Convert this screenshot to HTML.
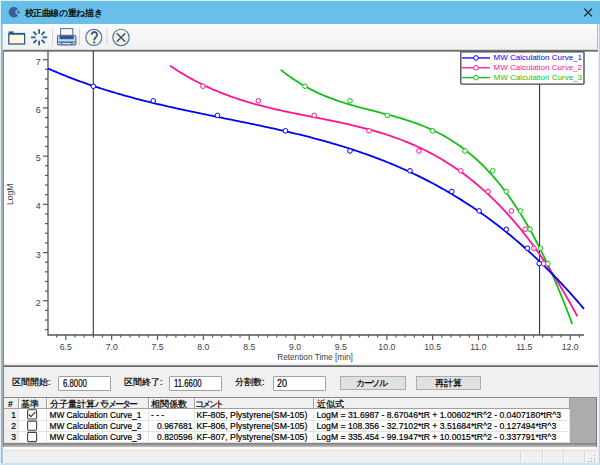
<!DOCTYPE html>
<html><head><meta charset="utf-8"><style>
*{box-sizing:border-box}
html,body{margin:0;padding:0;width:600px;height:465px;overflow:hidden;background:#dceef8;font-family:"Liberation Sans",sans-serif;}
.a{position:absolute}
.t{position:absolute;white-space:nowrap;line-height:1}
.s{-webkit-text-stroke:0.2px #000}
.in{-webkit-text-stroke:0.2px #000;position:absolute;background:#fff;border:1px solid #a2a2a2;border-radius:1px;font-size:10px;line-height:10px;padding-left:3.5px;color:#000}
.bt{-webkit-text-stroke:0.2px #000;position:absolute;background:#e1e1e1;border:1px solid #adadad;font-size:8.5px;line-height:12px;text-align:center;color:#000}
.g{position:absolute;background:#fff}
.sx{display:inline-block;transform:scaleX(0.78);transform-origin:0 0;margin-top:2.5px}
</style></head><body>
<div class="a" style="left:1px;top:1px;width:599px;height:464px;background:#68bfea"></div>
<div class="a" style="left:1px;top:24px;width:1px;height:441px;background:#7cc2ea"></div>
<div class="a" style="left:2px;top:24px;width:1px;height:441px;background:#b4ccdc"></div>
<div class="a" style="left:598px;top:24px;width:1px;height:441px;background:#f2eeee"></div>
<div class="a" style="left:599px;top:24px;width:1px;height:441px;background:#a8d6f2"></div>
<div class="a" style="left:1px;top:463px;width:599px;height:2px;background:#c6e4f6"></div>
<div class="t" style="left:24.5px;top:9px;font-size:9px;letter-spacing:-0.35px;color:#000;-webkit-text-stroke:0.25px #000">校正曲線の重ね描き</div>
<div class="a" style="left:3px;top:24px;width:595px;height:439px;background:#f0f0f0"></div>
<div class="a" style="left:3px;top:24px;width:594.5px;height:25px;background:linear-gradient(#fbfbfb,#f1f1f1);border-right:1px solid #b8b8b8"></div>
<div class="a" style="left:3px;top:49px;width:595px;height:1px;background:#d8d8d8"></div>
<div class="a" style="left:3px;top:50px;width:595px;height:1px;background:#6e6e6e"></div>
<div class="a" style="left:3px;top:51px;width:595px;height:1px;background:#9c9c9c"></div>
<div class="a" style="left:3px;top:52px;width:594.5px;height:311px;background:#fff"></div>
<div class="a" style="left:3px;top:363px;width:594.5px;height:2px;background:#f3f3f3"></div>
<div class="a" style="left:3px;top:365px;width:595px;height:1px;background:#8a8a8a"></div>
<div class="a" style="left:3px;top:366px;width:595px;height:1px;background:#6a6a6a"></div>
<div class="a" style="left:2px;top:50px;width:1px;height:396px;background:#a8a8a8"></div>
<div class="a" style="left:3px;top:50px;width:1px;height:396px;background:#8a8a8a"></div>
<!-- control panel -->
<div class="t s" style="left:12px;top:378px;font-size:9px;color:#000;">区間開始:</div>
<div class="in" style="left:58px;top:375.5px;width:52.5px;height:15.5px"><span class="sx">6.8000</span></div>
<div class="t s" style="left:124px;top:378px;font-size:9px;color:#000;">区間終了:</div>
<div class="in" style="left:169.3px;top:375.5px;width:52.5px;height:15.5px"><span class="sx">11.6600</span></div>
<div class="t s" style="left:235px;top:378px;font-size:9px;color:#000;">分割数:</div>
<div class="in" style="left:272.5px;top:375.5px;width:53.3px;height:15.5px"><span class="sx" style="transform:scaleX(0.9)">20</span></div>
<div class="bt" style="left:340px;top:376.4px;width:65.5px;height:14px"><span style="letter-spacing:-1.5px;margin-left:-3px">カーソル</span></div>
<div class="bt" style="left:416px;top:376.4px;width:65px;height:14px">再計算</div>
<!-- table -->
<div class="a" style="left:3px;top:397px;width:594px;height:50px;background:#acacac;border-top:1px solid #8a8a8a;border-left:1px solid #8a8a8a;border-right:1px solid #7a7a7a"></div>
<div class="a" style="left:4px;top:443px;width:592px;height:4px;background:linear-gradient(#7e7e7e,#9a9a9a 50%,#c4c4c4)"></div>
<div class="a" style="left:4px;top:398px;width:565px;height:45px;background:#fff"></div>
<div class="a" style="left:4px;top:398px;width:565px;height:11px;background:#f0f0f0;border-bottom:1px solid #a0a0a0"></div>
<div class="a" style="left:4px;top:409px;width:14px;height:34px;background:#f0f0f0"></div>
<div class="a" style="left:18px;top:398px;width:1px;height:11px;background:#a0a0a0"></div>
<div class="a" style="left:19px;top:398px;width:1px;height:10px;background:#fff"></div>
<div class="a" style="left:18px;top:409px;width:1px;height:34px;background:#e3e3e3"></div>
<div class="a" style="left:46px;top:398px;width:1px;height:11px;background:#a0a0a0"></div>
<div class="a" style="left:47px;top:398px;width:1px;height:10px;background:#fff"></div>
<div class="a" style="left:46px;top:409px;width:1px;height:34px;background:#e3e3e3"></div>
<div class="a" style="left:148px;top:398px;width:1px;height:11px;background:#a0a0a0"></div>
<div class="a" style="left:149px;top:398px;width:1px;height:10px;background:#fff"></div>
<div class="a" style="left:148px;top:409px;width:1px;height:34px;background:#e3e3e3"></div>
<div class="a" style="left:194px;top:398px;width:1px;height:11px;background:#a0a0a0"></div>
<div class="a" style="left:195px;top:398px;width:1px;height:10px;background:#fff"></div>
<div class="a" style="left:194px;top:409px;width:1px;height:34px;background:#e3e3e3"></div>
<div class="a" style="left:313px;top:398px;width:1px;height:11px;background:#a0a0a0"></div>
<div class="a" style="left:314px;top:398px;width:1px;height:10px;background:#fff"></div>
<div class="a" style="left:313px;top:409px;width:1px;height:34px;background:#e3e3e3"></div>
<div class="a" style="left:569px;top:398px;width:1px;height:11px;background:#a0a0a0"></div>
<div class="a" style="left:569px;top:409px;width:1px;height:34px;background:#e3e3e3"></div>
<div class="a" style="left:4px;top:420px;width:565px;height:1px;background:#e3e3e3"></div>
<div class="a" style="left:4px;top:431px;width:565px;height:1px;background:#e3e3e3"></div>
<div class="a" style="left:4px;top:442px;width:565px;height:1px;background:#e3e3e3"></div>
<div class="t s" style="left:8px;top:399.5px;font-size:8.5px;color:#000;">#</div>
<div class="t s" style="left:20.5px;top:399.5px;font-size:9px;color:#000;">基準</div>
<div class="t s" style="left:49.5px;top:399.5px;font-size:9px;color:#000;">分子量計算<span style="letter-spacing:-2.2px">パラメーター</span></div>
<div class="t s" style="left:151px;top:399.5px;font-size:9px;color:#000;">相関係数</div>
<div class="t s" style="left:195px;top:399.5px;font-size:9px;color:#000;"><span style="letter-spacing:-2.2px">コメント</span></div>
<div class="t s" style="left:317px;top:399.5px;font-size:9px;color:#000;">近似式</div>
<div class="t s" style="left:-84px;width:100px;text-align:right;top:410.5px;font-size:8.5px;color:#000;">1</div>
<div class="t s" style="left:49.5px;top:410.5px;font-size:8.3px;color:#000;">MW Calculation Curve_1</div>
<div class="t s" style="left:151px;top:410.5px;font-size:8.5px;color:#000;letter-spacing:2.3px">---</div>
<div class="t s" style="left:196.5px;top:410.5px;font-size:8.75px;color:#000;">KF-805, Plystyrene(SM-105)</div>
<div class="t s" style="left:316.5px;top:410.5px;font-size:8.65px;color:#000;">LogM = 31.6987 - 8.67046*tR + 1.00602*tR^2 - 0.0407180*tR^3</div>
<div class="t s" style="left:-84px;width:100px;text-align:right;top:421.8px;font-size:8.5px;color:#000;">2</div>
<div class="t s" style="left:49.5px;top:421.8px;font-size:8.3px;color:#000;">MW Calculation Curve_2</div>
<div class="t s" style="left:92.5px;width:100px;text-align:right;top:421.8px;font-size:8.5px;color:#000;">0.967681</div>
<div class="t s" style="left:196.5px;top:421.8px;font-size:8.75px;color:#000;">KF-806, Plystyrene(SM-105)</div>
<div class="t s" style="left:316.5px;top:421.8px;font-size:8.65px;color:#000;">LogM = 108.356 - 32.7102*tR + 3.51684*tR^2 - 0.127494*tR^3</div>
<div class="t s" style="left:-84px;width:100px;text-align:right;top:433.1px;font-size:8.5px;color:#000;">3</div>
<div class="t s" style="left:49.5px;top:433.1px;font-size:8.3px;color:#000;">MW Calculation Curve_3</div>
<div class="t s" style="left:92.5px;width:100px;text-align:right;top:433.1px;font-size:8.5px;color:#000;">0.820596</div>
<div class="t s" style="left:196.5px;top:433.1px;font-size:8.75px;color:#000;">KF-807, Plystyrene(SM-105)</div>
<div class="t s" style="left:316.5px;top:433.1px;font-size:8.65px;color:#000;">LogM = 335.454 - 99.1947*tR + 10.0015*tR^2 - 0.337791*tR^3</div>
<div class="a" style="left:3px;top:447px;width:594px;height:3px;background:#f8f8f8"></div>
<div class="a" style="left:3px;top:450px;width:594px;height:1px;background:#e0e0e0"></div>
<div class="a" style="left:520px;top:451px;width:1px;height:11px;background:#d6d6d6"></div>
<div class="a" style="left:521px;top:451px;width:1px;height:11px;background:#fafafa"></div>
<div class="a" style="left:542px;top:451px;width:1px;height:11px;background:#d6d6d6"></div>
<div class="a" style="left:543px;top:451px;width:1px;height:11px;background:#fafafa"></div>
<div class="a" style="left:563px;top:451px;width:1px;height:11px;background:#d6d6d6"></div>
<div class="a" style="left:564px;top:451px;width:1px;height:11px;background:#fafafa"></div>
<div class="a" style="left:584px;top:451px;width:1px;height:11px;background:#d6d6d6"></div>
<div class="a" style="left:585px;top:451px;width:1px;height:11px;background:#fafafa"></div>
<div class="a" style="left:594px;top:455px;width:1px;height:1px;background:#a8a8a8"></div>
<div class="a" style="left:591px;top:458px;width:1px;height:1px;background:#a8a8a8"></div>
<div class="a" style="left:594px;top:458px;width:1px;height:1px;background:#a8a8a8"></div>
<div class="a" style="left:588px;top:461px;width:1px;height:1px;background:#a8a8a8"></div>
<div class="a" style="left:591px;top:461px;width:1px;height:1px;background:#a8a8a8"></div>
<div class="a" style="left:594px;top:461px;width:1px;height:1px;background:#a8a8a8"></div>
<svg width="600" height="465" style="position:absolute;left:0;top:0">
<path d="M14.8,12.3 L17.90,9.10 A5.2,5.2 0 1 0 17.90,15.50 Z" fill="#3a6096"/>
<circle cx="18.4" cy="12.3" r="1.3" fill="#3a6096"/>
<path d="M584.3,8.6 L592,16.3 M592,8.6 L584.3,16.3" stroke="#111" stroke-width="1.05"/>
<path d="M8.8,32.2 H13.6" stroke="#2f5a90" stroke-width="1.6"/>
<rect x="8.8" y="33.6" width="15.8" height="10.4" fill="#fdf8dc" stroke="#2f5a90" stroke-width="1.3"/>
<path d="M8.8,33.8 H24.6" stroke="#2f5a90" stroke-width="1.8"/>
<line x1="42.60" y1="37.35" x2="47.10" y2="37.35" stroke="#2f5a90" stroke-width="1.8"/>
<line x1="41.57" y1="39.82" x2="44.76" y2="43.01" stroke="#2f5a90" stroke-width="1.8"/>
<line x1="39.10" y1="40.85" x2="39.10" y2="45.35" stroke="#2f5a90" stroke-width="1.8"/>
<line x1="36.63" y1="39.82" x2="33.44" y2="43.01" stroke="#2f5a90" stroke-width="1.8"/>
<line x1="35.60" y1="37.35" x2="31.10" y2="37.35" stroke="#2f5a90" stroke-width="1.8"/>
<line x1="36.63" y1="34.88" x2="33.44" y2="31.69" stroke="#2f5a90" stroke-width="1.8"/>
<line x1="39.10" y1="33.85" x2="39.10" y2="29.35" stroke="#2f5a90" stroke-width="1.8"/>
<line x1="41.57" y1="34.88" x2="44.76" y2="31.69" stroke="#2f5a90" stroke-width="1.8"/>
<line x1="52.5" y1="29.3" x2="52.5" y2="45.2" stroke="#d2d2d2" stroke-width="1"/>
<line x1="79.5" y1="29.3" x2="79.5" y2="45.2" stroke="#d2d2d2" stroke-width="1"/>
<line x1="107" y1="29.3" x2="107" y2="45.2" stroke="#d2d2d2" stroke-width="1"/>
<rect x="60.6" y="28.6" width="12.2" height="7" fill="#fbf6dc" stroke="#4a6fa5" stroke-width="1"/>
<rect x="57.5" y="35.3" width="18.4" height="9.7" rx="2" fill="#c9d8ea" stroke="#4169a2" stroke-width="1.1"/>
<rect x="59.6" y="35.8" width="14.2" height="3.4" fill="#2d5893"/>
<rect x="58.2" y="41.4" width="17" height="1.2" fill="#4a72aa"/>
<rect x="60.8" y="42.2" width="11.8" height="2.6" fill="#3d66a0"/>
<rect x="62.2" y="43" width="9" height="1.2" fill="#ebe6d8"/>
<circle cx="93.8" cy="37.45" r="8" fill="#f8f5dc" stroke="#4d72aa" stroke-width="1.2"/>
<path d="M91.6,34.8 A2.75,2.75 0 1 1 96.2,36.8 C95,37.8 94.3,38.3 94.3,40.2" fill="none" stroke="#2c5590" stroke-width="1.8"/>
<circle cx="94.3" cy="42.4" r="1.1" fill="#2c5590"/>
<circle cx="121" cy="37.45" r="8.2" fill="#f8f5dc" stroke="#4d72aa" stroke-width="1.2"/>
<path d="M116.8,33.2 L125.2,41.7 M125.2,33.2 L116.8,41.7" stroke="#2c5590" stroke-width="1.5"/>
<line x1="93.3" y1="51" x2="93.3" y2="335" stroke="#222" stroke-width="1"/>
<line x1="539.6" y1="51" x2="539.6" y2="335" stroke="#222" stroke-width="1"/>
<path d="M48,51 V335 H584" fill="none" stroke="#555" stroke-width="1.3"/>
<line x1="43" y1="59.70" x2="48" y2="59.70" stroke="#555" stroke-width="1.2"/>
<line x1="45" y1="69.34" x2="48" y2="69.34" stroke="#555" stroke-width="1.2"/>
<line x1="45" y1="78.98" x2="48" y2="78.98" stroke="#555" stroke-width="1.2"/>
<line x1="45" y1="88.63" x2="48" y2="88.63" stroke="#555" stroke-width="1.2"/>
<line x1="45" y1="98.27" x2="48" y2="98.27" stroke="#555" stroke-width="1.2"/>
<line x1="43" y1="107.91" x2="48" y2="107.91" stroke="#555" stroke-width="1.2"/>
<line x1="45" y1="117.55" x2="48" y2="117.55" stroke="#555" stroke-width="1.2"/>
<line x1="45" y1="127.19" x2="48" y2="127.19" stroke="#555" stroke-width="1.2"/>
<line x1="45" y1="136.84" x2="48" y2="136.84" stroke="#555" stroke-width="1.2"/>
<line x1="45" y1="146.48" x2="48" y2="146.48" stroke="#555" stroke-width="1.2"/>
<line x1="43" y1="156.12" x2="48" y2="156.12" stroke="#555" stroke-width="1.2"/>
<line x1="45" y1="165.76" x2="48" y2="165.76" stroke="#555" stroke-width="1.2"/>
<line x1="45" y1="175.40" x2="48" y2="175.40" stroke="#555" stroke-width="1.2"/>
<line x1="45" y1="185.05" x2="48" y2="185.05" stroke="#555" stroke-width="1.2"/>
<line x1="45" y1="194.69" x2="48" y2="194.69" stroke="#555" stroke-width="1.2"/>
<line x1="43" y1="204.33" x2="48" y2="204.33" stroke="#555" stroke-width="1.2"/>
<line x1="45" y1="213.97" x2="48" y2="213.97" stroke="#555" stroke-width="1.2"/>
<line x1="45" y1="223.61" x2="48" y2="223.61" stroke="#555" stroke-width="1.2"/>
<line x1="45" y1="233.26" x2="48" y2="233.26" stroke="#555" stroke-width="1.2"/>
<line x1="45" y1="242.90" x2="48" y2="242.90" stroke="#555" stroke-width="1.2"/>
<line x1="43" y1="252.54" x2="48" y2="252.54" stroke="#555" stroke-width="1.2"/>
<line x1="45" y1="262.18" x2="48" y2="262.18" stroke="#555" stroke-width="1.2"/>
<line x1="45" y1="271.82" x2="48" y2="271.82" stroke="#555" stroke-width="1.2"/>
<line x1="45" y1="281.47" x2="48" y2="281.47" stroke="#555" stroke-width="1.2"/>
<line x1="45" y1="291.11" x2="48" y2="291.11" stroke="#555" stroke-width="1.2"/>
<line x1="43" y1="300.75" x2="48" y2="300.75" stroke="#555" stroke-width="1.2"/>
<line x1="45" y1="310.39" x2="48" y2="310.39" stroke="#555" stroke-width="1.2"/>
<line x1="45" y1="320.03" x2="48" y2="320.03" stroke="#555" stroke-width="1.2"/>
<line x1="45" y1="329.68" x2="48" y2="329.68" stroke="#555" stroke-width="1.2"/>
<line x1="56.63" y1="335" x2="56.63" y2="337.5" stroke="#555" stroke-width="1.2"/>
<line x1="65.80" y1="335" x2="65.80" y2="340" stroke="#555" stroke-width="1.2"/>
<line x1="74.97" y1="335" x2="74.97" y2="337.5" stroke="#555" stroke-width="1.2"/>
<line x1="84.14" y1="335" x2="84.14" y2="337.5" stroke="#555" stroke-width="1.2"/>
<line x1="93.31" y1="335" x2="93.31" y2="337.5" stroke="#555" stroke-width="1.2"/>
<line x1="102.48" y1="335" x2="102.48" y2="337.5" stroke="#555" stroke-width="1.2"/>
<line x1="111.66" y1="335" x2="111.66" y2="340" stroke="#555" stroke-width="1.2"/>
<line x1="120.83" y1="335" x2="120.83" y2="337.5" stroke="#555" stroke-width="1.2"/>
<line x1="130.00" y1="335" x2="130.00" y2="337.5" stroke="#555" stroke-width="1.2"/>
<line x1="139.17" y1="335" x2="139.17" y2="337.5" stroke="#555" stroke-width="1.2"/>
<line x1="148.34" y1="335" x2="148.34" y2="337.5" stroke="#555" stroke-width="1.2"/>
<line x1="157.51" y1="335" x2="157.51" y2="340" stroke="#555" stroke-width="1.2"/>
<line x1="166.68" y1="335" x2="166.68" y2="337.5" stroke="#555" stroke-width="1.2"/>
<line x1="175.85" y1="335" x2="175.85" y2="337.5" stroke="#555" stroke-width="1.2"/>
<line x1="185.02" y1="335" x2="185.02" y2="337.5" stroke="#555" stroke-width="1.2"/>
<line x1="194.19" y1="335" x2="194.19" y2="337.5" stroke="#555" stroke-width="1.2"/>
<line x1="203.37" y1="335" x2="203.37" y2="340" stroke="#555" stroke-width="1.2"/>
<line x1="212.54" y1="335" x2="212.54" y2="337.5" stroke="#555" stroke-width="1.2"/>
<line x1="221.71" y1="335" x2="221.71" y2="337.5" stroke="#555" stroke-width="1.2"/>
<line x1="230.88" y1="335" x2="230.88" y2="337.5" stroke="#555" stroke-width="1.2"/>
<line x1="240.05" y1="335" x2="240.05" y2="337.5" stroke="#555" stroke-width="1.2"/>
<line x1="249.22" y1="335" x2="249.22" y2="340" stroke="#555" stroke-width="1.2"/>
<line x1="258.39" y1="335" x2="258.39" y2="337.5" stroke="#555" stroke-width="1.2"/>
<line x1="267.56" y1="335" x2="267.56" y2="337.5" stroke="#555" stroke-width="1.2"/>
<line x1="276.73" y1="335" x2="276.73" y2="337.5" stroke="#555" stroke-width="1.2"/>
<line x1="285.90" y1="335" x2="285.90" y2="337.5" stroke="#555" stroke-width="1.2"/>
<line x1="295.07" y1="335" x2="295.07" y2="340" stroke="#555" stroke-width="1.2"/>
<line x1="304.25" y1="335" x2="304.25" y2="337.5" stroke="#555" stroke-width="1.2"/>
<line x1="313.42" y1="335" x2="313.42" y2="337.5" stroke="#555" stroke-width="1.2"/>
<line x1="322.59" y1="335" x2="322.59" y2="337.5" stroke="#555" stroke-width="1.2"/>
<line x1="331.76" y1="335" x2="331.76" y2="337.5" stroke="#555" stroke-width="1.2"/>
<line x1="340.93" y1="335" x2="340.93" y2="340" stroke="#555" stroke-width="1.2"/>
<line x1="350.10" y1="335" x2="350.10" y2="337.5" stroke="#555" stroke-width="1.2"/>
<line x1="359.27" y1="335" x2="359.27" y2="337.5" stroke="#555" stroke-width="1.2"/>
<line x1="368.44" y1="335" x2="368.44" y2="337.5" stroke="#555" stroke-width="1.2"/>
<line x1="377.61" y1="335" x2="377.61" y2="337.5" stroke="#555" stroke-width="1.2"/>
<line x1="386.78" y1="335" x2="386.78" y2="340" stroke="#555" stroke-width="1.2"/>
<line x1="395.96" y1="335" x2="395.96" y2="337.5" stroke="#555" stroke-width="1.2"/>
<line x1="405.13" y1="335" x2="405.13" y2="337.5" stroke="#555" stroke-width="1.2"/>
<line x1="414.30" y1="335" x2="414.30" y2="337.5" stroke="#555" stroke-width="1.2"/>
<line x1="423.47" y1="335" x2="423.47" y2="337.5" stroke="#555" stroke-width="1.2"/>
<line x1="432.64" y1="335" x2="432.64" y2="340" stroke="#555" stroke-width="1.2"/>
<line x1="441.81" y1="335" x2="441.81" y2="337.5" stroke="#555" stroke-width="1.2"/>
<line x1="450.98" y1="335" x2="450.98" y2="337.5" stroke="#555" stroke-width="1.2"/>
<line x1="460.15" y1="335" x2="460.15" y2="337.5" stroke="#555" stroke-width="1.2"/>
<line x1="469.32" y1="335" x2="469.32" y2="337.5" stroke="#555" stroke-width="1.2"/>
<line x1="478.50" y1="335" x2="478.50" y2="340" stroke="#555" stroke-width="1.2"/>
<line x1="487.67" y1="335" x2="487.67" y2="337.5" stroke="#555" stroke-width="1.2"/>
<line x1="496.84" y1="335" x2="496.84" y2="337.5" stroke="#555" stroke-width="1.2"/>
<line x1="506.01" y1="335" x2="506.01" y2="337.5" stroke="#555" stroke-width="1.2"/>
<line x1="515.18" y1="335" x2="515.18" y2="337.5" stroke="#555" stroke-width="1.2"/>
<line x1="524.35" y1="335" x2="524.35" y2="340" stroke="#555" stroke-width="1.2"/>
<line x1="533.52" y1="335" x2="533.52" y2="337.5" stroke="#555" stroke-width="1.2"/>
<line x1="542.69" y1="335" x2="542.69" y2="337.5" stroke="#555" stroke-width="1.2"/>
<line x1="551.86" y1="335" x2="551.86" y2="337.5" stroke="#555" stroke-width="1.2"/>
<line x1="561.03" y1="335" x2="561.03" y2="337.5" stroke="#555" stroke-width="1.2"/>
<line x1="570.20" y1="335" x2="570.20" y2="340" stroke="#555" stroke-width="1.2"/>
<line x1="579.38" y1="335" x2="579.38" y2="337.5" stroke="#555" stroke-width="1.2"/>
<polyline points="280.75,69.74 282.75,71.34 284.74,72.90 286.74,74.41 288.73,75.88 290.73,77.31 292.73,78.69 294.72,80.03 296.72,81.33 298.72,82.59 300.71,83.81 302.71,84.99 304.70,86.14 306.70,87.25 308.70,88.33 310.69,89.38 312.69,90.39 314.69,91.37 316.68,92.32 318.68,93.24 320.67,94.14 322.67,95.00 324.67,95.84 326.66,96.66 328.66,97.45 330.66,98.21 332.65,98.96 334.65,99.68 336.64,100.38 338.64,101.07 340.64,101.73 342.63,102.38 344.63,103.01 346.63,103.63 348.62,104.23 350.62,104.82 352.61,105.40 354.61,105.96 356.61,106.52 358.60,107.06 360.60,107.60 362.60,108.13 364.59,108.66 366.59,109.18 368.58,109.69 370.58,110.20 372.58,110.71 374.57,111.22 376.57,111.73 378.57,112.24 380.56,112.75 382.56,113.27 384.55,113.78 386.55,114.31 388.55,114.84 390.54,115.37 392.54,115.92 394.54,116.47 396.53,117.03 398.53,117.61 400.52,118.19 402.52,118.79 404.52,119.41 406.51,120.03 408.51,120.68 410.51,121.34 412.50,122.02 414.50,122.71 416.49,123.43 418.49,124.17 420.49,124.93 422.48,125.72 424.48,126.52 426.48,127.36 428.47,128.22 430.47,129.10 432.46,130.02 434.46,130.96 436.46,131.94 438.45,132.94 440.45,133.98 442.44,135.05 444.44,136.15 446.44,137.29 448.43,138.47 450.43,139.68 452.43,140.93 454.42,142.22 456.42,143.55 458.41,144.92 460.41,146.33 462.41,147.79 464.40,149.29 466.40,150.84 468.40,152.43 470.39,154.07 472.39,155.76 474.38,157.49 476.38,159.28 478.38,161.12 480.37,163.01 482.37,164.96 484.37,166.95 486.36,169.01 488.36,171.12 490.35,173.29 492.35,175.51 494.35,177.80 496.34,180.14 498.34,182.55 500.34,185.02 502.33,187.55 504.33,190.15 506.32,192.81 508.32,195.54 510.32,198.33 512.31,201.20 514.31,204.13 516.31,207.14 518.30,210.21 520.30,213.36 522.29,216.58 524.29,219.88 526.29,223.25 528.28,226.70 530.28,230.22 532.28,233.83 534.27,237.51 536.27,241.27 538.26,245.12 540.26,249.05 542.26,253.06 544.25,257.15 546.25,261.33 548.25,265.60 550.24,269.96 552.24,274.40 554.23,278.94 556.23,283.56 558.23,288.27 560.22,293.08 562.22,297.98 564.22,302.98 566.21,308.07 568.21,313.26 570.20,318.55 572.20,323.93" fill="none" stroke="#14c014" stroke-width="1.8" stroke-linejoin="round"/>
<polyline points="170.00,65.66 172.00,67.01 173.99,68.34 175.99,69.64 177.99,70.91 179.99,72.16 181.98,73.39 183.98,74.59 185.98,75.76 187.97,76.91 189.97,78.03 191.97,79.14 193.96,80.22 195.96,81.27 197.96,82.31 199.96,83.32 201.95,84.31 203.95,85.28 205.95,86.23 207.94,87.16 209.94,88.07 211.94,88.96 213.94,89.83 215.93,90.68 217.93,91.51 219.93,92.32 221.92,93.12 223.92,93.90 225.92,94.66 227.91,95.41 229.91,96.14 231.91,96.85 233.91,97.55 235.90,98.23 237.90,98.90 239.90,99.55 241.89,100.19 243.89,100.82 245.89,101.43 247.89,102.03 249.88,102.62 251.88,103.20 253.88,103.76 255.87,104.31 257.87,104.86 259.87,105.39 261.86,105.91 263.86,106.42 265.86,106.92 267.86,107.42 269.85,107.90 271.85,108.38 273.85,108.85 275.84,109.31 277.84,109.76 279.84,110.21 281.84,110.65 283.83,111.09 285.83,111.52 287.83,111.94 289.82,112.36 291.82,112.78 293.82,113.19 295.81,113.60 297.81,114.00 299.81,114.41 301.81,114.81 303.80,115.20 305.80,115.60 307.80,115.99 309.79,116.38 311.79,116.78 313.79,117.17 315.79,117.56 317.78,117.95 319.78,118.35 321.78,118.74 323.77,119.14 325.77,119.54 327.77,119.94 329.76,120.35 331.76,120.75 333.76,121.16 335.76,121.58 337.75,122.00 339.75,122.42 341.75,122.85 343.74,123.29 345.74,123.73 347.74,124.17 349.74,124.63 351.73,125.09 353.73,125.55 355.73,126.03 357.72,126.51 359.72,127.01 361.72,127.51 363.71,128.02 365.71,128.54 367.71,129.07 369.71,129.61 371.70,130.16 373.70,130.72 375.70,131.30 377.69,131.88 379.69,132.48 381.69,133.09 383.69,133.72 385.68,134.36 387.68,135.01 389.68,135.67 391.67,136.36 393.67,137.05 395.67,137.76 397.66,138.49 399.66,139.23 401.66,139.99 403.66,140.77 405.65,141.56 407.65,142.37 409.65,143.20 411.64,144.05 413.64,144.92 415.64,145.80 417.64,146.71 419.63,147.64 421.63,148.58 423.63,149.55 425.62,150.54 427.62,151.54 429.62,152.58 431.61,153.63 433.61,154.71 435.61,155.80 437.61,156.93 439.60,158.07 441.60,159.24 443.60,160.44 445.59,161.66 447.59,162.90 449.59,164.17 451.59,165.47 453.58,166.79 455.58,168.14 457.58,169.52 459.57,170.93 461.57,172.36 463.57,173.82 465.56,175.31 467.56,176.83 469.56,178.38 471.56,179.95 473.55,181.56 475.55,183.20 477.55,184.87 479.54,186.57 481.54,188.31 483.54,190.07 485.54,191.87 487.53,193.70 489.53,195.57 491.53,197.46 493.52,199.40 495.52,201.36 497.52,203.36 499.51,205.40 501.51,207.47 503.51,209.58 505.51,211.72 507.50,213.90 509.50,216.12 511.50,218.38 513.49,220.67 515.49,223.00 517.49,225.37 519.49,227.78 521.48,230.23 523.48,232.72 525.48,235.25 527.47,237.82 529.47,240.43 531.47,243.08 533.46,245.77 535.46,248.51 537.46,251.28 539.46,254.10 541.45,256.97 543.45,259.88 545.45,262.83 547.44,265.82 549.44,268.86 551.44,271.95 553.44,275.08 555.43,278.25 557.43,281.48 559.43,284.75 561.42,288.06 563.42,291.43 565.42,294.84 567.41,298.30 569.41,301.81 571.41,305.36 573.41,308.97 575.40,312.62 577.40,316.33" fill="none" stroke="#ff1493" stroke-width="1.8" stroke-linejoin="round"/>
<polyline points="48.00,68.51 49.99,69.38 51.99,70.24 53.98,71.10 55.97,71.94 57.96,72.77 59.96,73.60 61.95,74.41 63.94,75.21 65.93,76.01 67.93,76.79 69.92,77.56 71.91,78.33 73.90,79.08 75.90,79.83 77.89,80.57 79.88,81.29 81.87,82.01 83.87,82.72 85.86,83.43 87.85,84.12 89.84,84.81 91.84,85.48 93.83,86.15 95.82,86.81 97.81,87.47 99.81,88.11 101.80,88.75 103.79,89.38 105.78,90.00 107.78,90.62 109.77,91.23 111.76,91.83 113.75,92.43 115.75,93.01 117.74,93.60 119.73,94.17 121.72,94.74 123.72,95.30 125.71,95.86 127.70,96.41 129.70,96.95 131.69,97.49 133.68,98.03 135.67,98.55 137.67,99.08 139.66,99.59 141.65,100.10 143.64,100.61 145.64,101.11 147.63,101.61 149.62,102.10 151.61,102.59 153.61,103.07 155.60,103.55 157.59,104.03 159.58,104.50 161.58,104.96 163.57,105.43 165.56,105.88 167.55,106.34 169.55,106.79 171.54,107.24 173.53,107.69 175.52,108.13 177.52,108.57 179.51,109.00 181.50,109.44 183.49,109.87 185.49,110.30 187.48,110.72 189.47,111.15 191.46,111.57 193.46,111.99 195.45,112.41 197.44,112.82 199.43,113.24 201.43,113.65 203.42,114.06 205.41,114.47 207.41,114.88 209.40,115.29 211.39,115.69 213.38,116.10 215.38,116.50 217.37,116.91 219.36,117.31 221.35,117.72 223.35,118.12 225.34,118.52 227.33,118.93 229.32,119.33 231.32,119.73 233.31,120.14 235.30,120.54 237.29,120.95 239.29,121.36 241.28,121.76 243.27,122.17 245.26,122.58 247.26,122.99 249.25,123.40 251.24,123.81 253.23,124.23 255.23,124.65 257.22,125.06 259.21,125.48 261.20,125.91 263.20,126.33 265.19,126.76 267.18,127.19 269.17,127.62 271.17,128.05 273.16,128.49 275.15,128.93 277.14,129.38 279.14,129.82 281.13,130.27 283.12,130.72 285.12,131.18 287.11,131.64 289.10,132.11 291.09,132.57 293.09,133.05 295.08,133.52 297.07,134.00 299.06,134.49 301.06,134.98 303.05,135.47 305.04,135.97 307.03,136.47 309.03,136.98 311.02,137.49 313.01,138.01 315.00,138.54 317.00,139.07 318.99,139.60 320.98,140.14 322.97,140.69 324.97,141.24 326.96,141.80 328.95,142.37 330.94,142.94 332.94,143.51 334.93,144.10 336.92,144.69 338.91,145.29 340.91,145.89 342.90,146.50 344.89,147.12 346.88,147.75 348.88,148.38 350.87,149.02 352.86,149.67 354.86,150.33 356.85,150.99 358.84,151.66 360.83,152.34 362.83,153.03 364.82,153.73 366.81,154.43 368.80,155.15 370.80,155.87 372.79,156.60 374.78,157.34 376.77,158.09 378.77,158.85 380.76,159.62 382.75,160.39 384.74,161.18 386.74,161.98 388.73,162.78 390.72,163.60 392.71,164.43 394.71,165.26 396.70,166.11 398.69,166.97 400.68,167.84 402.68,168.71 404.67,169.60 406.66,170.50 408.65,171.41 410.65,172.34 412.64,173.27 414.63,174.21 416.62,175.17 418.62,176.14 420.61,177.12 422.60,178.11 424.59,179.11 426.59,180.13 428.58,181.16 430.57,182.20 432.57,183.25 434.56,184.32 436.55,185.39 438.54,186.49 440.54,187.59 442.53,188.71 444.52,189.84 446.51,190.98 448.51,192.14 450.50,193.31 452.49,194.49 454.48,195.69 456.48,196.90 458.47,198.13 460.46,199.37 462.45,200.62 464.45,201.89 466.44,203.17 468.43,204.47 470.42,205.78 472.42,207.11 474.41,208.45 476.40,209.81 478.39,211.18 480.39,212.57 482.38,213.97 484.37,215.39 486.36,216.83 488.36,218.28 490.35,219.75 492.34,221.23 494.33,222.73 496.33,224.24 498.32,225.78 500.31,227.32 502.30,228.89 504.30,230.47 506.29,232.07 508.28,233.69 510.28,235.32 512.27,236.97 514.26,238.64 516.25,240.32 518.25,242.03 520.24,243.75 522.23,245.48 524.22,247.24 526.22,249.02 528.21,250.81 530.20,252.62 532.19,254.45 534.19,256.30 536.18,258.17 538.17,260.05 540.16,261.96 542.16,263.88 544.15,265.83 546.14,267.79 548.13,269.77 550.13,271.77 552.12,273.80 554.11,275.84 556.10,277.90 558.10,279.98 560.09,282.08 562.08,284.20 564.07,286.35 566.07,288.51 568.06,290.69 570.05,292.90 572.04,295.12 574.04,297.37 576.03,299.64 578.02,301.93 580.01,304.24 582.01,306.57 584.00,308.92" fill="none" stroke="#0000ff" stroke-width="1.8" stroke-linejoin="round"/>
<circle cx="305" cy="86.25" r="2.3" fill="#fff" stroke="#14c014" stroke-width="1"/>
<circle cx="350" cy="100.8" r="2.3" fill="#fff" stroke="#14c014" stroke-width="1"/>
<circle cx="387.3" cy="115.4" r="2.3" fill="#fff" stroke="#14c014" stroke-width="1"/>
<circle cx="432.7" cy="130.8" r="2.3" fill="#fff" stroke="#14c014" stroke-width="1"/>
<circle cx="465" cy="151" r="2.3" fill="#fff" stroke="#14c014" stroke-width="1"/>
<circle cx="492.7" cy="170.8" r="2.3" fill="#fff" stroke="#14c014" stroke-width="1"/>
<circle cx="506.3" cy="191.5" r="2.3" fill="#fff" stroke="#14c014" stroke-width="1"/>
<circle cx="520.5" cy="210.9" r="2.3" fill="#fff" stroke="#14c014" stroke-width="1"/>
<circle cx="530" cy="229.3" r="2.3" fill="#fff" stroke="#14c014" stroke-width="1"/>
<circle cx="540.4" cy="248.2" r="2.3" fill="#fff" stroke="#14c014" stroke-width="1"/>
<circle cx="547.8" cy="263.6" r="2.3" fill="#fff" stroke="#14c014" stroke-width="1"/>
<circle cx="202.9" cy="86.25" r="2.3" fill="#fff" stroke="#ff1493" stroke-width="1"/>
<circle cx="258.3" cy="100.8" r="2.3" fill="#fff" stroke="#ff1493" stroke-width="1"/>
<circle cx="314.2" cy="115.4" r="2.3" fill="#fff" stroke="#ff1493" stroke-width="1"/>
<circle cx="369" cy="130.8" r="2.3" fill="#fff" stroke="#ff1493" stroke-width="1"/>
<circle cx="419" cy="151" r="2.3" fill="#fff" stroke="#ff1493" stroke-width="1"/>
<circle cx="460.8" cy="170.8" r="2.3" fill="#fff" stroke="#ff1493" stroke-width="1"/>
<circle cx="488.1" cy="191.5" r="2.3" fill="#fff" stroke="#ff1493" stroke-width="1"/>
<circle cx="511.5" cy="210.9" r="2.3" fill="#fff" stroke="#ff1493" stroke-width="1"/>
<circle cx="525.2" cy="229.3" r="2.3" fill="#fff" stroke="#ff1493" stroke-width="1"/>
<circle cx="533.9" cy="248.2" r="2.3" fill="#fff" stroke="#ff1493" stroke-width="1"/>
<circle cx="543.5" cy="263.6" r="2.3" fill="#fff" stroke="#ff1493" stroke-width="1"/>
<circle cx="93.3" cy="86.25" r="2.3" fill="#fff" stroke="#0000ff" stroke-width="1"/>
<circle cx="153.3" cy="100.8" r="2.3" fill="#fff" stroke="#0000ff" stroke-width="1"/>
<circle cx="217.5" cy="115.4" r="2.3" fill="#fff" stroke="#0000ff" stroke-width="1"/>
<circle cx="285.4" cy="130.8" r="2.3" fill="#fff" stroke="#0000ff" stroke-width="1"/>
<circle cx="350" cy="151" r="2.3" fill="#fff" stroke="#0000ff" stroke-width="1"/>
<circle cx="410" cy="170.8" r="2.3" fill="#fff" stroke="#0000ff" stroke-width="1"/>
<circle cx="451.8" cy="191.5" r="2.3" fill="#fff" stroke="#0000ff" stroke-width="1"/>
<circle cx="479.1" cy="210.9" r="2.3" fill="#fff" stroke="#0000ff" stroke-width="1"/>
<circle cx="506.3" cy="229.3" r="2.3" fill="#fff" stroke="#0000ff" stroke-width="1"/>
<circle cx="527.4" cy="248.2" r="2.3" fill="#fff" stroke="#0000ff" stroke-width="1"/>
<circle cx="539.2" cy="263.6" r="2.3" fill="#fff" stroke="#0000ff" stroke-width="1"/>
<rect x="460.8" y="51.8" width="123.2" height="32.3" rx="0.8" fill="#fff" stroke="#444" stroke-width="1.3"/>
<line x1="462" y1="57.95" x2="490" y2="57.95" stroke="#0000ff" stroke-width="1.3"/>
<circle cx="476" cy="57.95" r="2.3" fill="#fff" stroke="#0000ff" stroke-width="1"/>
<line x1="462" y1="67.8" x2="490" y2="67.8" stroke="#ff1493" stroke-width="1.3"/>
<circle cx="476" cy="67.8" r="2.3" fill="#fff" stroke="#ff1493" stroke-width="1"/>
<line x1="462" y1="77.65" x2="490" y2="77.65" stroke="#14c014" stroke-width="1.3"/>
<circle cx="476" cy="77.65" r="2.3" fill="#fff" stroke="#14c014" stroke-width="1"/>
<rect x="27.6" y="409.8" width="9" height="9.2" rx="1" fill="#fff" stroke="#444" stroke-width="1.1"/>
<rect x="27.6" y="421.1" width="9" height="9.2" rx="1" fill="#fff" stroke="#444" stroke-width="1.1"/>
<rect x="27.6" y="432.4" width="9" height="9.2" rx="1" fill="#fff" stroke="#444" stroke-width="1.1"/>
<path d="M28.6,414.3 L30.9,416.6 L35.3,412.2" fill="none" stroke="#333" stroke-width="1.2"/>
</svg>
<div class="t" style="right:559.2px;top:298.9px;font-size:9px;color:#3a3f4a">2</div>
<div class="t" style="right:559.2px;top:250.6px;font-size:9px;color:#3a3f4a">3</div>
<div class="t" style="right:559.2px;top:202.4px;font-size:9px;color:#3a3f4a">4</div>
<div class="t" style="right:559.2px;top:154.2px;font-size:9px;color:#3a3f4a">5</div>
<div class="t" style="right:559.2px;top:106.0px;font-size:9px;color:#3a3f4a">6</div>
<div class="t" style="right:559.2px;top:57.8px;font-size:9px;color:#3a3f4a">7</div>
<div class="t" style="left:50.8px;width:30px;text-align:center;top:342.6px;font-size:8.7px;color:#3a3f4a">6.5</div>
<div class="t" style="left:96.7px;width:30px;text-align:center;top:342.6px;font-size:8.7px;color:#3a3f4a">7.0</div>
<div class="t" style="left:142.5px;width:30px;text-align:center;top:342.6px;font-size:8.7px;color:#3a3f4a">7.5</div>
<div class="t" style="left:188.4px;width:30px;text-align:center;top:342.6px;font-size:8.7px;color:#3a3f4a">8.0</div>
<div class="t" style="left:234.2px;width:30px;text-align:center;top:342.6px;font-size:8.7px;color:#3a3f4a">8.5</div>
<div class="t" style="left:280.1px;width:30px;text-align:center;top:342.6px;font-size:8.7px;color:#3a3f4a">9.0</div>
<div class="t" style="left:325.9px;width:30px;text-align:center;top:342.6px;font-size:8.7px;color:#3a3f4a">9.5</div>
<div class="t" style="left:371.8px;width:30px;text-align:center;top:342.6px;font-size:8.7px;color:#3a3f4a">10.0</div>
<div class="t" style="left:417.6px;width:30px;text-align:center;top:342.6px;font-size:8.7px;color:#3a3f4a">10.5</div>
<div class="t" style="left:463.5px;width:30px;text-align:center;top:342.6px;font-size:8.7px;color:#3a3f4a">11.0</div>
<div class="t" style="left:509.3px;width:30px;text-align:center;top:342.6px;font-size:8.7px;color:#3a3f4a">11.5</div>
<div class="t" style="left:555.2px;width:30px;text-align:center;top:342.6px;font-size:8.7px;color:#3a3f4a">12.0</div>
<div class="t " style="left:277.2px;top:354.2px;font-size:8.25px;color:#3a3f4a;">Retention Time [min]</div>
<div class="t" style="left:-5px;top:190px;width:30px;text-align:center;font-size:8.5px;color:#3a3f4a;transform:rotate(-90deg)">LogM</div>
<div class="t " style="left:493.5px;top:54.3px;font-size:8px;color:#0000ff;">MW Calculation Curve_1</div>
<div class="t " style="left:493.5px;top:64.14999999999999px;font-size:8px;color:#ff1493;">MW Calculation Curve_2</div>
<div class="t " style="left:493.5px;top:74.0px;font-size:8px;color:#14c014;">MW Calculation Curve_3</div>
</body></html>
